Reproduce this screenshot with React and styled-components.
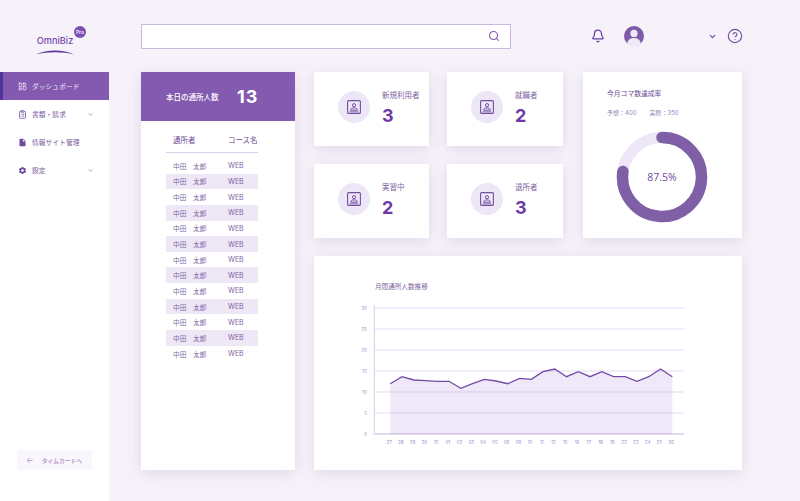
import React from 'react'
import styled, { createGlobalStyle } from 'styled-components'
import {
  Bell,
  ChevronDown,
  CircleHelp,
  ClipboardList,
  LayoutDashboard,
  Search
} from 'lucide-react'
import { MdInsertDriveFile, MdSettings } from 'react-icons/md'

const PURPLE = '#8459b0'
const SANS = `Inter, 'Noto Sans CJK JP', sans-serif`

const navItems = [
  { label: 'ダッシュボード', Icon: LayoutDashboard, active: true },
  { label: '書類・請求', Icon: ClipboardList, more: true },
  { label: '情報サイト管理', Icon: MdInsertDriveFile },
  { label: '設定', Icon: MdSettings, more: true }
]

const stats = [
  { label: '新規利用者', value: 3 },
  { label: '就職者', value: 2 },
  { label: '実習中', value: 2 },
  { label: '退所者', value: 3 }
]

const rows = Array.from({ length: 13 }, (_, i) => i)

const days = ['27', '28', '29', '30', '31', '01', '02', '03', '04', '05', '06', '09', '10', '11', '12', '15', '16', '17', '18', '19', '22', '23', '24', '25', '26']
const lineY = [383.7, 376.7, 380, 380.7, 381.3, 381.3, 388.3, 383.7, 379.3, 381, 383.7, 378.3, 379.3, 371.7, 369, 376.7, 371.7, 376.7, 371.7, 376.7, 376.7, 381.3, 376.7, 369, 376.7]
const dayX = i => 390.3 + i * 11.75
const linePoints = lineY.map((y, i) => `${dayX(i)},${y}`).join(' ')
const areaPoints = `${dayX(0)},434 ${linePoints} ${dayX(24)},434`
const ticks = [30, 25, 20, 15, 10, 5, 0]
const tickY = i => 308 + i * 21

const PortraitIcon = () => (
  <svg width="14" height="14" viewBox="0 0 14 14" fill="none" stroke="#7350a0">
    <rect x="0.6" y="0.6" width="12.8" height="12.8" rx="1" strokeWidth="1.1" />
    <circle cx="7" cy="5.2" r="1.6" strokeWidth="1" />
    <path d="M3.6 10.2c0-1.7 1.5-2.3 3.4-2.3s3.4.6 3.4 2.3z" strokeWidth="1" />
    <path d="M2.6 11.8h8.8" strokeWidth="0.8" />
  </svg>
)

export default function App() {
  return (
    <Page>
      <GlobalStyle />
      <Logo>
        <LogoMark>
          <LogoName>OmniBiz</LogoName>
          <ProBadge>Pro</ProBadge>
          <Swoosh viewBox="0 0 40 6">
            <path d="M1 5.5C12 0.2 28 0.2 39 5.5C28 2.6 12 2.6 1 5.5Z" fill="#5b3a9c" />
          </Swoosh>
        </LogoMark>
      </Logo>

      <Topbar>
        <SearchBox>
          <Search size={12} strokeWidth={2.1} color="#7f5aa8" />
        </SearchBox>
        <Bell size={14} strokeWidth={2.1} color="#6a3fa0" />
        <Avatar viewBox="0 0 20 20">
          <circle cx="10" cy="10" r="10" fill="#7d5ba6" />
          <circle cx="10" cy="7.4" r="3.6" fill="#efe9f7" />
          <ellipse cx="10" cy="17" rx="6.6" ry="5" fill="#efe9f7" />
        </Avatar>
        <UserMenu>
          <ChevronDown size={9} strokeWidth={2.8} color="#6a3fa0" />
        </UserMenu>
        <CircleHelp size={16} strokeWidth={1.7} color="#7350a0" />
      </Topbar>

      <Sidebar>
        {navItems.map(({ label, Icon, active, more }) => (
          <NavItem key={label} $active={active}>
            <NavIcon $active={active}>
              <Icon size={9} />
            </NavIcon>
            <NavLabel>{label}</NavLabel>
            {more && <ChevronDown size={7} color="#8a6db0" />}
          </NavItem>
        ))}
        <TimeCard>
          <TimeCardArrow>←</TimeCardArrow>
          <TimeCardLabel>タイムカードへ</TimeCardLabel>
        </TimeCard>
      </Sidebar>

      <Main>
        <AttendanceCard>
          <AttendanceHead>
            <AttendanceTitle>本日の通所人数</AttendanceTitle>
            <AttendanceCount>13</AttendanceCount>
          </AttendanceHead>
          <Roster>
            <RosterHead>
              <span>通所者</span>
              <span>コース名</span>
            </RosterHead>
            {rows.map(i => (
              <RosterRow key={i} $striped={i % 2 === 1}>
                <span>中田　太郎</span>
                <RosterCourse>WEB</RosterCourse>
              </RosterRow>
            ))}
          </Roster>
        </AttendanceCard>

        <RightColumn>
          <TopRow>
            <StatGrid>
              {stats.map(s => (
                <StatCard key={s.label}>
                  <StatIcon>
                    <PortraitIcon />
                  </StatIcon>
                  <div>
                    <StatLabel>{s.label}</StatLabel>
                    <StatValue>{s.value}</StatValue>
                  </div>
                </StatCard>
              ))}
            </StatGrid>

            <DonutCard>
              <DonutTitle>今月コマ数達成率</DonutTitle>
              <DonutMeta>
                <span>予想：400</span>
                <span>実際：350</span>
              </DonutMeta>
              <DonutWrap>
                <svg width="92" height="92" viewBox="0 0 92 92">
                  <circle cx="46" cy="46" r="39.5" fill="none" stroke="#ece6f6" strokeWidth="11" />
                  <path
                    d="M46 6.5A39.5 39.5 0 1 1 6.9 40.5"
                    fill="none"
                    stroke="#7f60a6"
                    strokeWidth="11.5"
                    strokeLinecap="round"
                  />
                </svg>
                <DonutValue>87.5%</DonutValue>
              </DonutWrap>
            </DonutCard>
          </TopRow>

          <ChartCard>
            <ChartTitle>月間通所人数推移</ChartTitle>
            <svg width="428" height="178" viewBox="314 292 428 178">
              {ticks.map((t, i) => (
                <g key={t}>
                  <line
                    x1="375"
                    x2="684"
                    y1={tickY(i)}
                    y2={tickY(i)}
                    stroke={t === 0 ? '#d9cfe9' : '#ece7f8'}
                    strokeWidth={t === 0 ? 1.6 : 1.3}
                  />
                  <AxisText x="367" y={tickY(i) + 1.8} textAnchor="end">
                    {t}
                  </AxisText>
                </g>
              ))}
              <line x1="374.3" x2="374.3" y1="305" y2="434.7" stroke="#dcd7e4" strokeWidth="1.2" />
              <polygon points={areaPoints} fill="#7b3fc4" fillOpacity="0.12" />
              <polyline points={linePoints} fill="none" stroke="#734aa6" strokeWidth="1.3" />
              {days.map((d, i) => (
                <AxisText key={i} x={dayX(i) - 1.2} y="443.5" textAnchor="middle">
                  {d}
                </AxisText>
              ))}
            </svg>
          </ChartCard>
        </RightColumn>
      </Main>
    </Page>
  )
}

const GlobalStyle = createGlobalStyle`
  html, body {
    margin: 0;
    background: #f7f2fa;
  }
  body {
    font-family: ${SANS};
    color: #6a4a96;
  }
  * {
    box-sizing: border-box;
  }
`

const Page = styled.div`
  width: 800px;
  height: 501px;
  overflow: hidden;
  display: grid;
  grid-template-columns: 109px 1fr;
  grid-template-rows: 72px 1fr;
`

const Logo = styled.div`
  display: flex;
  padding: 26px 0 0 35px;
`

const LogoMark = styled.div`
  position: relative;
  width: 40px;
`

const LogoName = styled.div`
  font-size: 9.2px;
  font-weight: 500;
  line-height: 12px;
  margin-top: 9px;
  color: #7548ac;
  text-align: center;
  white-space: nowrap;
`

const ProBadge = styled.div`
  position: absolute;
  top: 0;
  left: 39px;
  width: 12px;
  height: 12px;
  border-radius: 50%;
  background: #7c4fb0;
  color: #e6d9f4;
  font-size: 5px;
  font-weight: 700;
  line-height: 12px;
  text-align: center;
`

const Swoosh = styled.svg`
  display: block;
  width: 40px;
  height: 6px;
  margin-top: 2px;
`

const Topbar = styled.header`
  display: flex;
  align-items: center;
  padding-left: 32px;
`

const SearchBox = styled.div`
  width: 370px;
  height: 25px;
  background: #fff;
  border: 1px solid #c9b8df;
  display: flex;
  align-items: center;
  justify-content: flex-end;
  padding-right: 10px;
  margin-right: 80px;
`

const Avatar = styled.svg`
  width: 20px;
  height: 20px;
  margin-left: 19px;
`

const UserMenu = styled.div`
  width: 73px;
  display: flex;
  justify-content: flex-end;
  margin-right: 10px;
`

const Sidebar = styled.nav`
  background: #fff;
  display: flex;
  flex-direction: column;
  padding-bottom: 31px;
`

const NavItem = styled.div`
  height: 28px;
  display: flex;
  align-items: center;
  padding-right: 15px;
  padding-left: ${p => (p.$active ? '15px' : '18px')};
  background: ${p => (p.$active ? PURPLE : 'transparent')};
  border-left: ${p => (p.$active ? '3px solid #50349c' : 'none')};
  color: ${p => (p.$active ? '#f3ecfa' : '#7a5aa0')};
`

const NavIcon = styled.span`
  display: flex;
  width: 14px;
  color: ${p => (p.$active ? '#f3ecfa' : '#6f4a9c')};
`

const NavLabel = styled.span`
  flex: 1;
  font-size: 6.7px;
  letter-spacing: 0.1px;
  white-space: nowrap;
`

const TimeCard = styled.div`
  margin: auto 0 0 17px;
  width: 75px;
  height: 20px;
  background: #faf7fc;
  display: flex;
  align-items: center;
  gap: 8px;
  padding-left: 9px;
`

const TimeCardArrow = styled.span`
  font-size: 8px;
  color: #b59ad2;
`

const TimeCardLabel = styled.span`
  color: #a988c8;
  font-weight: 500;
  font-size: 5.8px;
  white-space: nowrap;
`

const Main = styled.main`
  display: flex;
  gap: 19px;
  padding: 0 58px 31px 32px;
`

const Card = styled.section`
  background: #fff;
  box-shadow: 0 3px 14px rgba(85, 60, 120, 0.14);
`

const AttendanceCard = styled(Card)`
  width: 154px;
`

const AttendanceHead = styled.div`
  height: 49px;
  background: ${PURPLE};
  color: #fff;
  display: flex;
  align-items: center;
  padding-left: 25px;
`

const AttendanceTitle = styled.span`
  width: 71px;
  font-size: 7.5px;
  font-weight: 500;
  white-space: nowrap;
`

const AttendanceCount = styled.span`
  font-size: 18px;
  font-weight: 700;
  letter-spacing: 1px;
`

const Roster = styled.div`
  padding: 13px 37px 0 25px;
`

const RosterHead = styled.div`
  display: grid;
  grid-template-columns: 55px 1fr;
  height: 18.5px;
  padding-left: 7px;
  margin-bottom: 5.5px;
  border-bottom: 1.5px solid #d9cfe9;
  font-size: 7.5px;
  color: #6a4a96;
  white-space: nowrap;
`

const RosterRow = styled.div`
  display: grid;
  grid-template-columns: 55px 1fr;
  align-items: center;
  height: 15.65px;
  padding-left: 7px;
  font-size: 6.7px;
  color: #8066a6;
  background: ${p => (p.$striped ? '#eee7f6' : 'transparent')};
  white-space: nowrap;
`

const RosterCourse = styled.span`
  font-size: 7px;
`

const RightColumn = styled.div`
  width: 428px;
  display: flex;
  flex-direction: column;
  gap: 18px;
`

const TopRow = styled.div`
  display: flex;
  gap: 20px;
  height: 166px;
`

const StatGrid = styled.div`
  display: grid;
  grid-template-columns: 115px 116px;
  grid-template-rows: 74px 74px;
  gap: 18px;
`

const StatCard = styled(Card)`
  display: flex;
  align-items: flex-start;
  gap: 12px;
  padding: 19px 0 0 24px;
`

const StatIcon = styled.div`
  width: 32px;
  height: 32px;
  border-radius: 50%;
  background: #ece6f6;
  display: flex;
  align-items: center;
  justify-content: center;
`

const StatLabel = styled.div`
  font-size: 7.5px;
  line-height: 10px;
  color: #7d62a0;
  white-space: nowrap;
`

const StatValue = styled.div`
  margin-top: 3px;
  font-size: 18px;
  font-weight: 700;
  line-height: 24px;
  color: #6f3aa8;
`

const DonutCard = styled(Card)`
  flex: 1;
  padding: 17px 0 0 24px;
`

const DonutTitle = styled.div`
  font-size: 6.8px;
  line-height: 10px;
  color: #6a4a96;
  white-space: nowrap;
`

const DonutMeta = styled.div`
  display: flex;
  gap: 13px;
  margin-top: 10px;
  font-size: 6px;
  line-height: 8px;
  color: #9a82bc;
  white-space: nowrap;
`

const DonutWrap = styled.div`
  position: relative;
  width: 92px;
  height: 92px;
  margin: 13.5px 0 0 9px;
`

const DonutValue = styled.div`
  position: absolute;
  inset: 0;
  display: flex;
  align-items: center;
  justify-content: center;
  font-family: 'Open Sans', sans-serif;
  font-size: 10.5px;
  color: #6f4aa0;
`

const ChartCard = styled(Card)`
  height: 214px;
  padding-top: 26px;

  svg {
    display: block;
  }
`

const ChartTitle = styled.div`
  height: 10px;
  padding-left: 61px;
  font-size: 6.6px;
  line-height: 10px;
  color: #7d62a0;
`

const AxisText = styled.text`
  font-family: ${SANS};
  font-size: 4.6px;
  fill: #a58cc6;
`
